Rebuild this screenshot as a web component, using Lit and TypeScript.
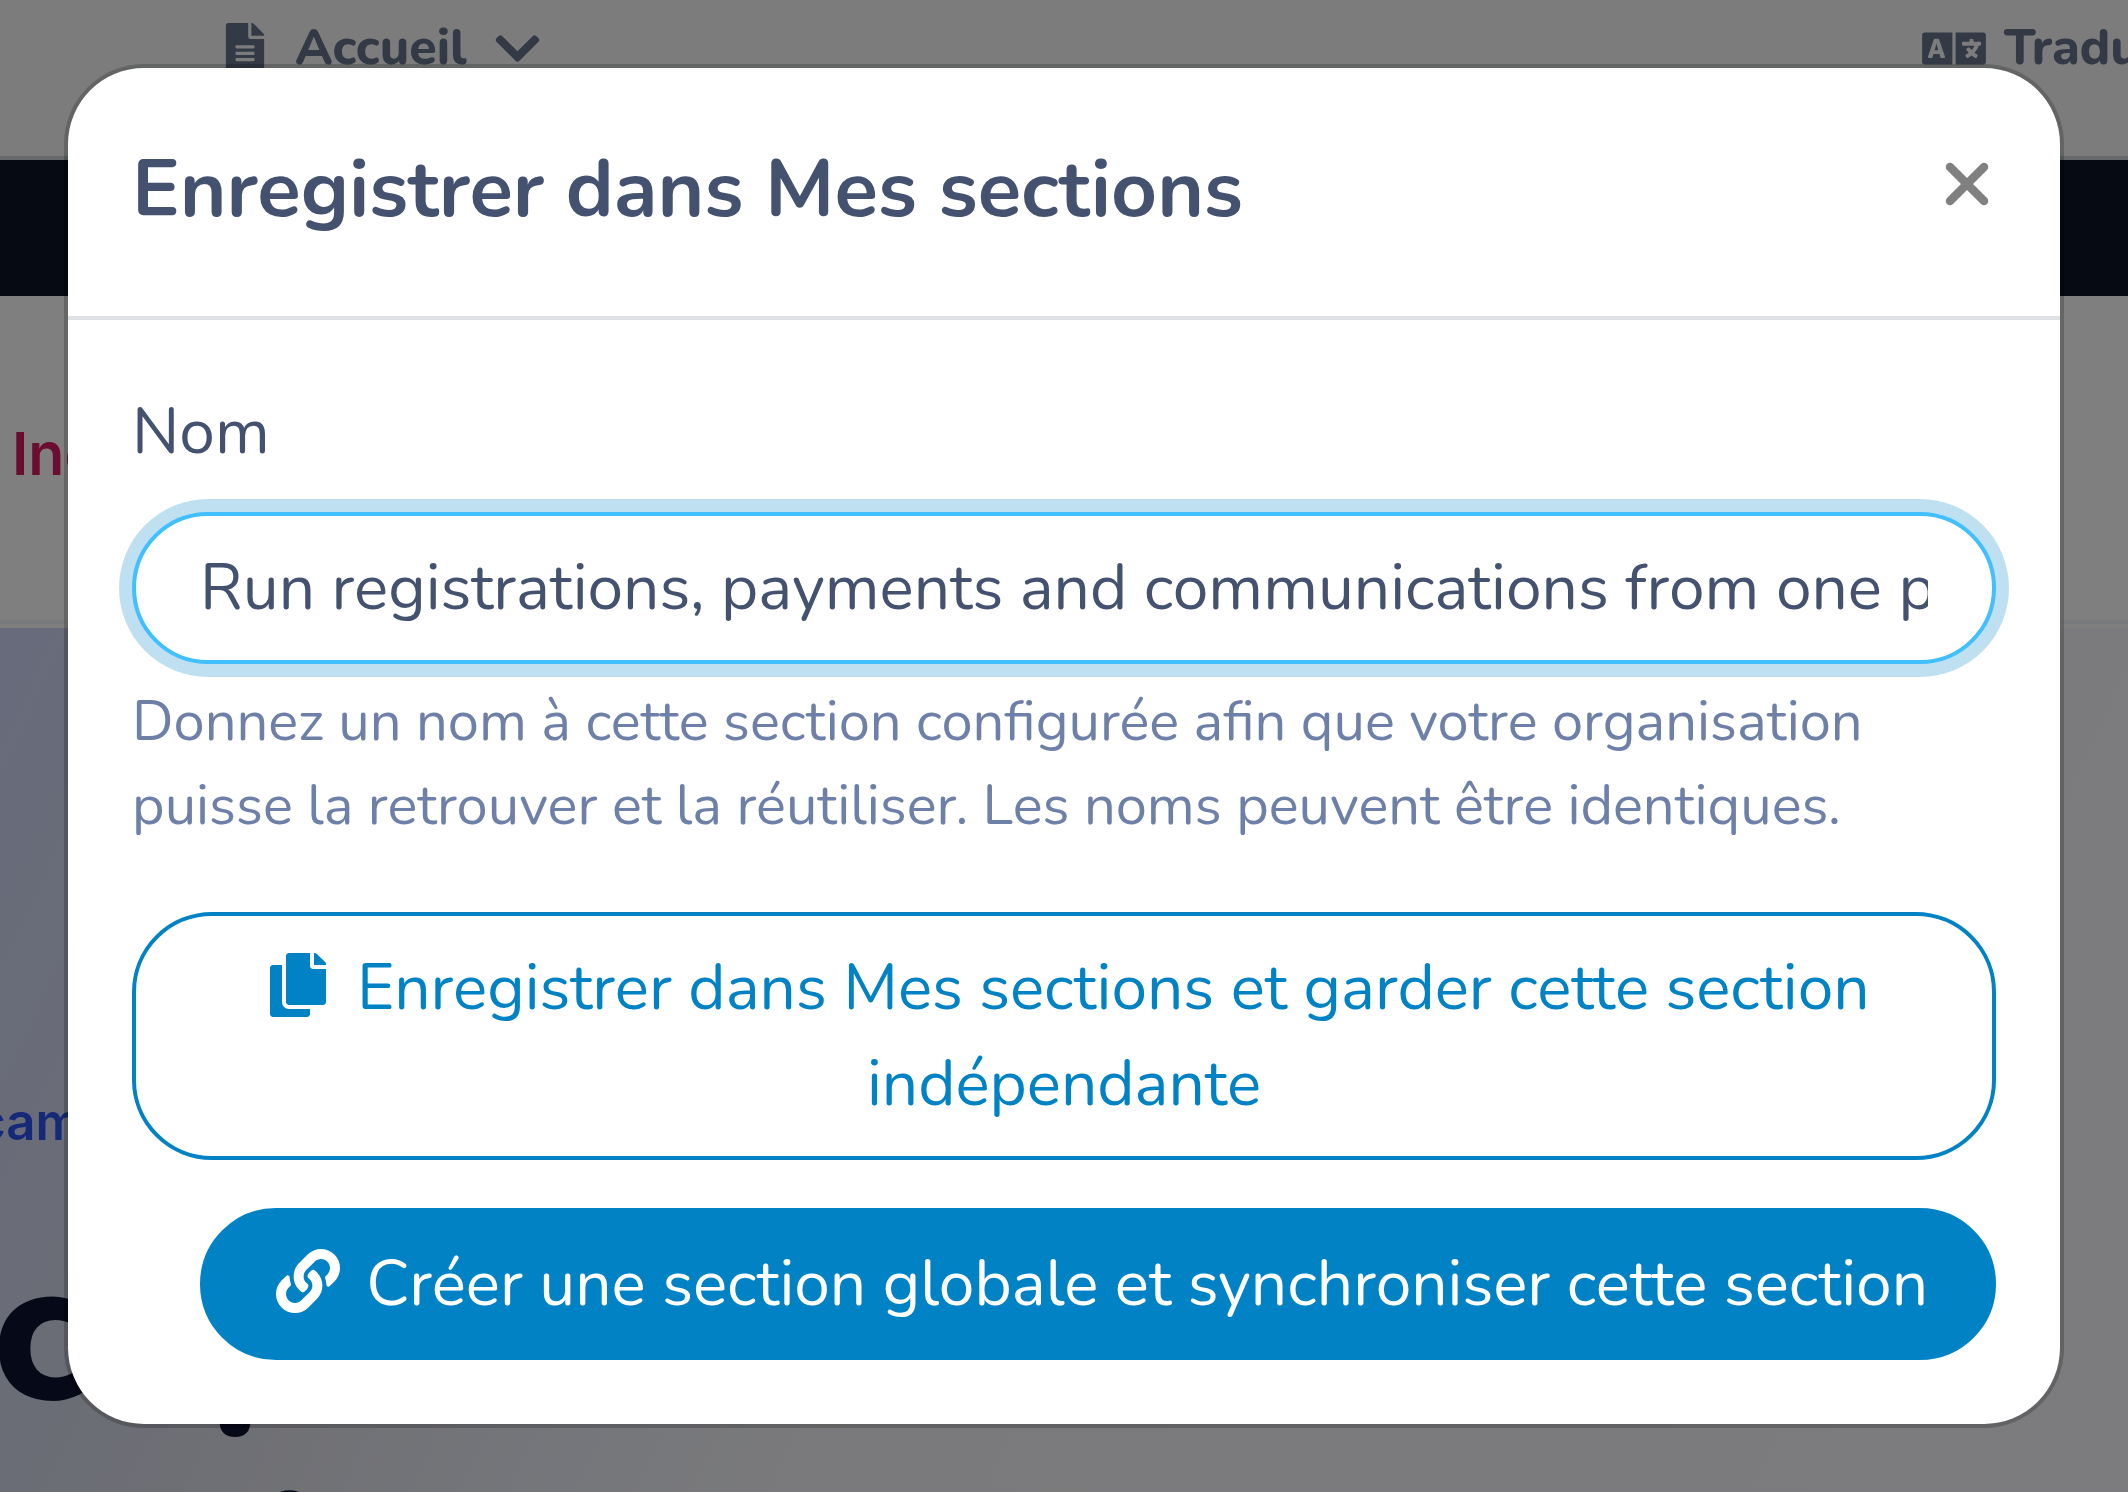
import { LitElement, html, css, svg } from "lit";
import { customElement, state } from "lit/decorators.js";

const icon = (name: string, width: number, d: string) => html`
  <svg class="icon ${name}" viewBox="0 0 ${width} 512" aria-hidden="true">${svg`<path fill="currentColor" d=${d} />`}</svg>
`;

const FILE =
  "M224 136V0H24C10.7 0 0 10.7 0 24v464c0 13.3 10.7 24 24 24h336c13.3 0 24-10.7 24-24V160H248c-13.2 0-24-10.8-24-24zm64 236c0 6.6-5.4 12-12 12H108c-6.6 0-12-5.4-12-12v-8c0-6.6 5.4-12 12-12h168c6.6 0 12 5.4 12 12v8zm0-64c0 6.6-5.4 12-12 12H108c-6.6 0-12-5.4-12-12v-8c0-6.6 5.4-12 12-12h168c6.6 0 12 5.4 12 12v8zm0-72v8c0 6.6-5.4 12-12 12H108c-6.6 0-12-5.4-12-12v-8c0-6.6 5.4-12 12-12h168c6.6 0 12 5.4 12 12zm96-114.1v6.1H256V0h6.1c6.4 0 12.5 2.5 17 7l97.9 98c4.5 4.5 7 10.6 7 16.9z";
const CHEVRON =
  "M207.029 381.476L12.686 187.132c-9.373-9.373-9.373-24.569 0-33.941l22.667-22.667c9.357-9.357 24.522-9.375 33.901-.04L224 284.505l154.745-154.021c9.379-9.335 24.544-9.317 33.901.04l22.667 22.667c9.373 9.373 9.373 24.569 0 33.941L240.971 381.476c-9.373 9.372-24.569 9.372-33.942 0z";
const LANGUAGE =
  "M152.1 236.2c-3.5-12.1-7.8-33.2-7.8-33.2h-.5s-4.3 21.1-7.8 33.2l-11.1 37.5H163zM616 96H336v320h280c13.3 0 24-10.7 24-24V120c0-13.3-10.7-24-24-24zm-24 120c0 6.6-5.4 12-12 12h-11.4c-6.9 23.6-21.7 47.4-42.7 69.9 8.4 6.4 17.1 12.5 26.1 18 5.5 3.4 7.3 10.5 4.1 16.2l-7.9 13.9c-3.4 5.9-10.9 7.8-16.7 4.3-12.6-7.8-24.5-16.1-35.4-24.9-10.9 8.7-22.7 17.1-35.4 24.9-5.8 3.5-13.3 1.6-16.7-4.3l-7.9-13.9c-3.2-5.6-1.4-12.8 4.2-16.2 9.3-5.7 18-11.7 26.1-18-7.9-8.4-14.9-17-21-25.7-4-5.7-2.2-13.6 3.7-17.1l6.5-3.9 7.3-4.3c5.4-3.2 12.4-1.7 16 3.4 5 7 10.8 14 17.4 20.9 13.5-14.2 23.8-28.9 30-43.2H412c-6.6 0-12-5.4-12-12v-16c0-6.6 5.4-12 12-12h64v-16c0-6.6 5.4-12 12-12h16c6.6 0 12 5.4 12 12v16h64c6.6 0 12 5.4 12 12zM0 120v272c0 13.3 10.7 24 24 24h280V96H24c-13.3 0-24 10.7-24 24zm58.9 216.1L116.4 167c1.7-4.9 6.2-8.1 11.4-8.1h32.5c5.1 0 9.7 3.3 11.4 8.1l57.5 169.1c2.6 7.8-3.1 15.9-11.4 15.9h-22.9a12 12 0 0 1-11.5-8.6l-9.4-31.9h-60.2l-9.1 31.8c-1.5 5.1-6.2 8.7-11.5 8.7H70.3c-8.2 0-14-8.1-11.4-15.9z";
const COPY =
  "M320 448v40c0 13.255-10.745 24-24 24H24c-13.255 0-24-10.745-24-24V120c0-13.255 10.745-24 24-24h72v296c0 30.879 25.121 56 56 56h168zm0-344V0H152c-13.255 0-24 10.745-24 24v368c0 13.255 10.745 24 24 24h272c13.255 0 24-10.745 24-24V128H344c-13.2 0-24-10.8-24-24zm120.971-31.029L375.029 7.029A24 24 0 0 0 358.059 0H352v96h96v-6.059a24 24 0 0 0-7.029-16.97z";
const LINK =
  "M326.612 185.391c59.747 59.809 58.927 155.698.36 214.59-.11.12-.24.25-.36.37l-67.2 67.2c-59.27 59.27-155.699 59.262-214.96 0-59.27-59.26-59.27-155.7 0-214.96l37.106-37.106c9.84-9.84 26.786-3.3 27.294 10.606.648 17.722 3.826 35.527 9.69 52.721 1.986 5.822.567 12.262-3.783 16.612l-13.087 13.087c-28.026 28.026-28.905 73.66-1.155 101.96 28.024 28.579 74.086 28.749 102.325.51l67.2-67.19c28.191-28.191 28.073-73.757 0-101.83-3.701-3.694-7.429-6.564-10.341-8.569a16.037 16.037 0 0 1-6.947-12.606c-.396-10.567 3.348-21.456 11.698-29.806l21.054-21.055c5.521-5.521 14.182-6.199 20.584-1.731a152.482 152.482 0 0 1 20.522 17.197zM467.547 44.449c-59.261-59.262-155.69-59.27-214.96 0l-67.2 67.2c-.12.12-.25.25-.36.37-58.566 58.892-59.387 154.781.36 214.59a152.454 152.454 0 0 0 20.521 17.196c6.402 4.468 15.064 3.789 20.584-1.731l21.054-21.055c8.35-8.35 12.094-19.239 11.698-29.806a16.037 16.037 0 0 0-6.947-12.606c-2.912-2.005-6.64-4.875-10.341-8.569-28.073-28.073-28.191-73.639 0-101.83l67.2-67.19c28.239-28.239 74.3-28.069 102.325.51 27.75 28.3 26.872 73.934-1.155 101.96l-13.087 13.087c-4.35 4.35-5.769 10.79-3.783 16.612 5.864 17.194 9.042 34.999 9.69 52.721.509 13.906 17.454 20.446 27.294 10.606l37.106-37.106c59.271-59.259 59.271-155.699.001-214.959z";

/** The page builder that stays visible, dimmed, around the dialog. */
@customElement("editor-page")
class EditorPage extends LitElement {
  static styles = css`
    :host {
      display: flex;
      flex-direction: column;
      height: 100%;
      overflow: hidden;
      background: #fff;
      white-space: nowrap;
    }
    .toolbar {
      display: flex;
      justify-content: space-between;
      box-sizing: border-box;
      height: 160px;
      padding: 8px 0 0 213px;
      background: #f8f9fb;
      border-bottom: 4px solid #ced4da;
      flex: none;
    }
    .tool {
      display: flex;
      align-items: center;
      align-self: flex-start;
      gap: 18px;
      height: 80px;
      padding: 0;
      border: 0;
      background: none;
      color: #66758c;
      font: 800 50px/80px Nunito, "Open Sans", sans-serif;
    }
    .translate {
      width: 206px;
    }
    .icon {
      display: block;
      height: 51px;
      width: 64px;
      flex: none;
    }
    .chevron {
      width: 45px;
      margin-left: 10px;
    }
    .band {
      height: 136px;
      background: #0c1424;
      flex: none;
    }
    .site-nav {
      display: flex;
      align-items: center;
      box-sizing: border-box;
      height: 328px;
      padding: 0 0 8px 12px;
      border-bottom: 4px solid #f3f4f6;
      flex: none;
    }
    .site-nav a {
      color: #d71a60;
      font: 600 59px/72px Inter, sans-serif;
      text-decoration: none;
    }
    .hero {
      flex: 1;
      min-height: 0;
      margin-top: 4px;
      padding-top: 446px;
      box-sizing: border-box;
      background: linear-gradient(115deg, #ced7f7 0%, #d6daec 16%, #e0e1ea 26%, #ebedf6 38%, #f5f5f8 48%, #f8f8fe 100%);
    }
    .eyebrow {
      margin: 0 0 0 -24px;
      color: #2b52f0;
      font: 600 51px/96px Inter, sans-serif;
    }
    .headline {
      margin: 42px 0 0 -8px;
      color: #0b1230;
      font: 800 204px/240px Nunito, "Open Sans", sans-serif;
    }
    .headline span {
      display: block;
    }
    .second {
      padding-left: 270px;
    }
  `;

  render() {
    return html`
      <header class="toolbar">
        <button class="tool" type="button">
          ${icon("file", 384, FILE)}<span>Accueil</span>${icon("chevron", 448, CHEVRON)}
        </button>
        <button class="tool translate" type="button">
          ${icon("language", 640, LANGUAGE)}<span>Tradu</span>
        </button>
      </header>
      <div class="band"></div>
      <nav class="site-nav"><a href="#">Inc</a></nav>
      <section class="hero">
        <p class="eyebrow">cam</p>
        <h1 class="headline"><span>cop</span><span class="second">i</span></h1>
      </section>
    `;
  }
}

/** Dialog that names a section before it is saved. */
@customElement("save-section-dialog")
class SaveSectionDialog extends LitElement {
  static styles = css`
    :host {
      display: block;
      box-sizing: border-box;
      font: 400 64px/96px Nunito, "Open Sans", sans-serif;
      color: #44526f;
      background: #fff;
      background-clip: padding-box;
      border: 4px solid rgba(0, 0, 0, 0.2);
      border-radius: 80px;
    }
    .header {
      display: flex;
      align-items: flex-start;
      justify-content: space-between;
      padding: 62px 64px 66px;
      border-bottom: 4px solid #dee2e6;
    }
    .title {
      margin: 0;
      font-size: 80px;
      font-weight: 700;
      line-height: 120px;
    }
    .close {
      display: flex;
      padding: 30px 4px;
      border: 0;
      background: none;
      color: #808080;
    }
    .close svg {
      display: block;
      width: 48px;
      height: 48px;
    }
    .body {
      padding: 64px;
    }
    .label {
      display: block;
      margin-bottom: 32px;
    }
    .field {
      display: block;
      box-sizing: border-box;
      width: 100%;
      height: 152px;
      padding: 24px 64px;
      border: 4px solid #42bfff;
      border-radius: 76px;
      outline: 0;
      box-shadow: 0 0 0 13px rgba(0, 130, 196, 0.25);
      background: #fff;
      color: inherit;
      font: inherit;
    }
    .help {
      margin: 16px 0 0;
      color: #6f80a8;
      font-size: 56px;
      line-height: 84px;
    }
    .footer {
      display: flex;
      flex-direction: column;
      align-items: flex-end;
      gap: 48px;
      padding: 0 64px 64px;
    }
    .btn {
      box-sizing: border-box;
      padding: 24px 64px;
      border: 4px solid #0082c4;
      border-radius: 80px;
      font: inherit;
      text-align: center;
      color: #0082c4;
      background: #fff;
    }
    .primary {
      color: #fff;
      background: #0082c4;
    }
    .icon {
      display: inline-block;
      width: 80px;
      height: 64px;
      margin-right: 2px;
      vertical-align: -8px;
    }
  `;

  @state() private name = "Run registrations, payments and communications from one place";

  private onInput(event: Event) {
    this.name = (event.target as HTMLInputElement).value;
  }

  render() {
    return html`
      <div class="header">
        <h2 class="title" id="title">Enregistrer dans Mes sections</h2>
        <button class="close" type="button" aria-label="Fermer">
          <svg viewBox="0 0 48 48" aria-hidden="true">
            <path d="M6 7 40 41M40 7 6 41" stroke="currentColor" stroke-width="8.500" stroke-linecap="round" />
          </svg>
        </button>
      </div>
      <div class="body">
        <label class="label" for="name">Nom</label>
        <input class="field" id="name" type="text" aria-describedby="help" .value=${this.name} @input=${this.onInput} />
        <p class="help" id="help">
          Donnez un nom à cette section configurée afin que votre organisation puisse la retrouver et la réutiliser.
          Les noms peuvent être identiques.
        </p>
      </div>
      <div class="footer">
        <button class="btn" type="button">${icon("copy", 448, COPY)}Enregistrer dans Mes sections et garder cette section indépendante</button>
        <button class="btn primary" type="button">${icon("link", 512, LINK)}Créer une section globale et synchroniser cette section</button>
      </div>
    `;
  }
}

@customElement("app-root")
class AppRoot extends LitElement {
  static styles = css`
    :host {
      display: block;
      height: 100vh;
      overflow: hidden;
    }
    .backdrop {
      position: fixed;
      inset: 0;
      box-sizing: border-box;
      padding: 64px;
      background: rgba(0, 0, 0, 0.5);
    }
  `;

  render() {
    return html`
      <editor-page></editor-page>
      <div class="backdrop">
        <save-section-dialog role="dialog" aria-modal="true" aria-label="Enregistrer dans Mes sections"></save-section-dialog>
      </div>
    `;
  }
}
